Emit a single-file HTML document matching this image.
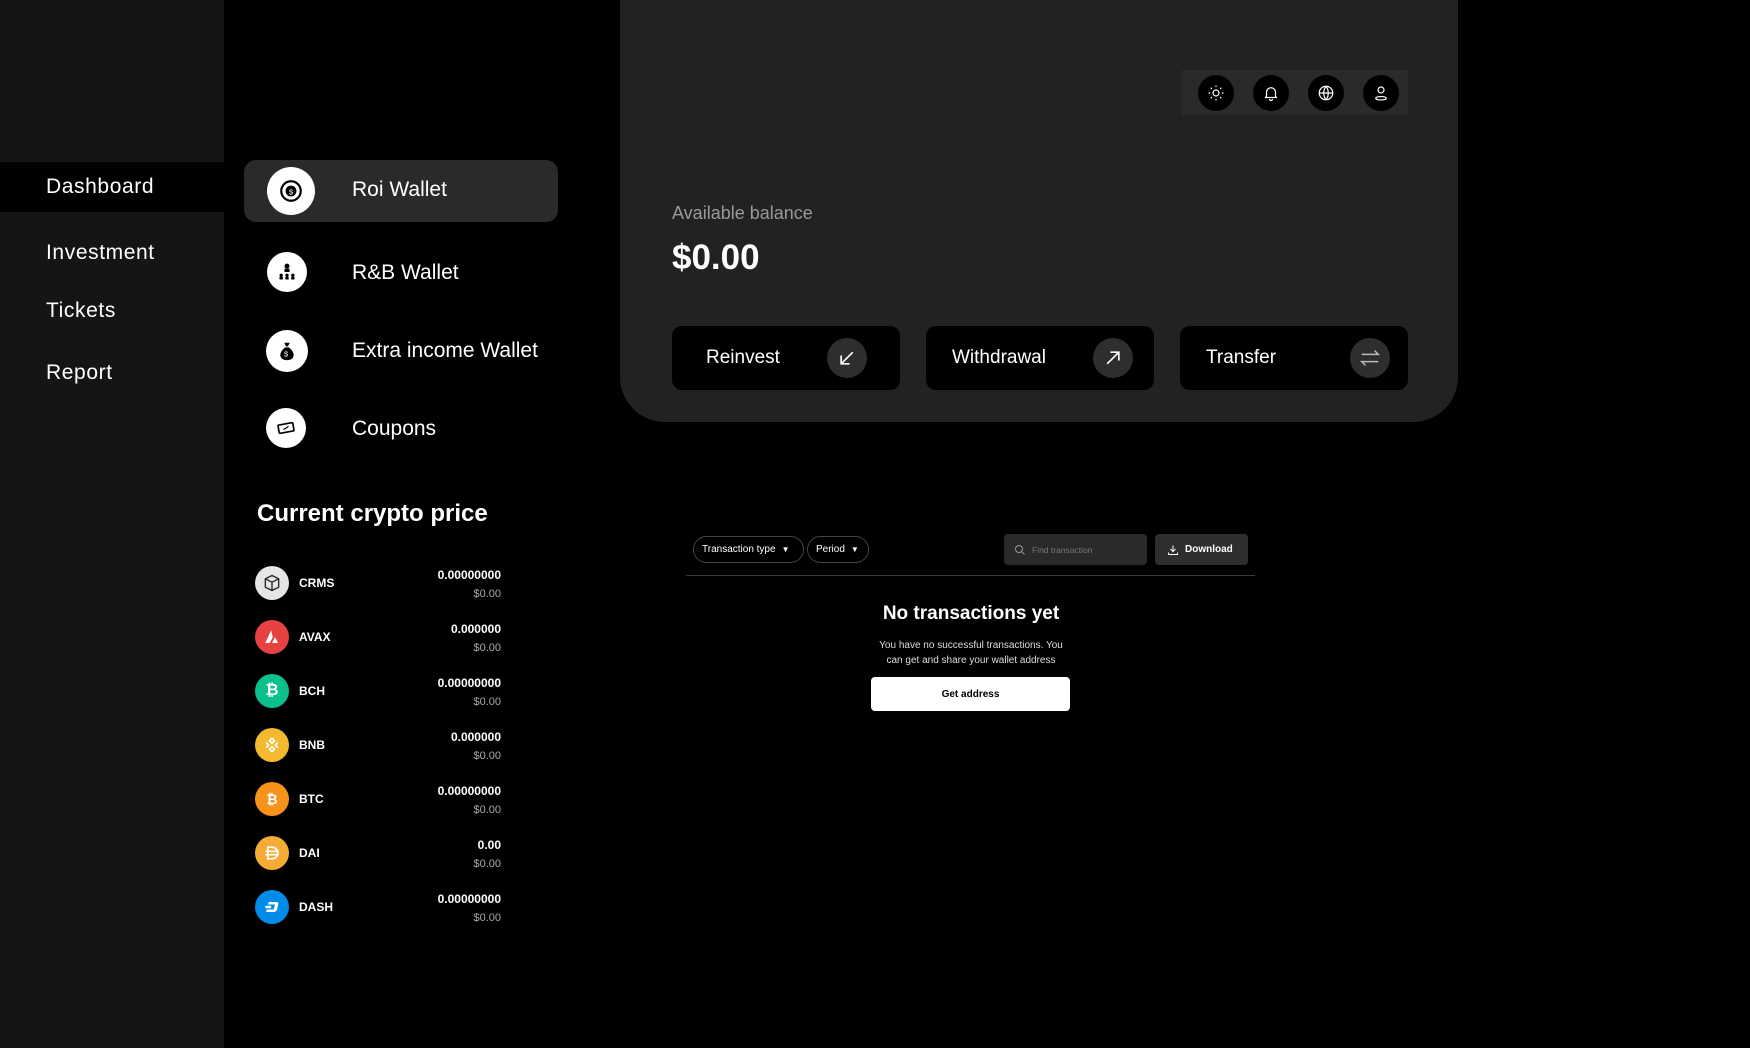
<!DOCTYPE html>
<html><head><meta charset="utf-8"><style>
*{margin:0;padding:0;box-sizing:border-box}
body{width:1750px;height:1048px;background:#000;color:#fff;font-family:"Liberation Sans",sans-serif;position:relative;overflow:hidden}
.abs{position:absolute}
.side{left:0;top:0;width:224px;height:1048px;background:#151515}
.nav{position:absolute;left:46px;font-size:21px;letter-spacing:.6px;transform:translateY(-50%)}
.wi{position:absolute;border-radius:50%;background:#fff;display:flex;align-items:center;justify-content:center}
.wt{position:absolute;left:352px;font-size:21px;transform:translateY(-50%)}
.ci{position:absolute;left:255px;width:34px;height:34px;border-radius:50%;display:flex;align-items:center;justify-content:center;font-weight:bold;font-size:16px;color:#fff}
.cs{position:absolute;left:299px;font-size:12px;font-weight:bold;transform:translateY(-50%)}
.cv{position:absolute;right:1249px;text-align:right;font-size:12px;font-weight:bold;line-height:18px}
.cv span{color:#aaa;font-size:11px;font-weight:normal}
.card{left:620px;top:-50px;width:838px;height:472px;background:#222;border-radius:0 0 45px 45px}
.ic{position:absolute;top:75px;width:36px;height:36px;border-radius:50%;background:#000;display:flex;align-items:center;justify-content:center}
.btn{position:absolute;top:326px;width:228px;height:64px;background:#000;border-radius:10px}
.btn .t{position:absolute;left:34px;top:50%;transform:translateY(-50%);font-size:19px}
.btn .c{position:absolute;right:33px;top:12px;width:40px;height:40px;border-radius:50%;background:#2e2e2e;display:flex;align-items:center;justify-content:center}
.pill{position:absolute;top:536px;height:27px;border:1px solid #444;border-radius:14px;font-size:10px;display:flex;align-items:center;padding-left:8px}
</style></head><body>
<div class="abs side"></div>
<div class="abs" style="left:0;top:162px;width:224px;height:50px;background:#000"></div>
<div class="nav" style="top:187px">Dashboard</div>
<div class="nav" style="top:253px">Investment</div>
<div class="nav" style="top:311px">Tickets</div>
<div class="nav" style="top:373px">Report</div>

<div class="abs" style="left:244px;top:160px;width:314px;height:62px;background:#2a2a2a;border-radius:12px"></div>
<div class="wi" style="left:267px;top:167px;width:48px;height:48px"><svg width="26" height="26" viewBox="0 0 24 24"><circle cx="12" cy="12" r="9" fill="none" stroke="#000" stroke-width="2"/><circle cx="12" cy="12" r="5" fill="#000"/><text x="12" y="15" font-size="7" fill="#fff" text-anchor="middle">$</text></svg></div>
<div class="wt" style="top:190px">Roi Wallet</div>
<div class="wi" style="left:267px;top:252px;width:40px;height:40px"><svg width="20" height="20" viewBox="0 0 24 24" fill="#000"><circle cx="12" cy="5" r="3"/><rect x="9" y="8" width="6" height="4"/><circle cx="5" cy="16" r="2"/><circle cx="12" cy="16" r="2"/><circle cx="19" cy="16" r="2"/><rect x="3" y="18" width="4" height="3"/><rect x="10" y="18" width="4" height="3"/><rect x="17" y="18" width="4" height="3"/></svg></div>
<div class="wt" style="top:273px">R&amp;B Wallet</div>
<div class="wi" style="left:266px;top:330px;width:42px;height:42px"><svg width="22" height="22" viewBox="0 0 24 24" fill="#000"><path d="M9 3h6l-2 4h-2z"/><path d="M10 8h4c4 3 6 7 5 10-1 3-4 4-7 4s-6-1-7-4c-1-3 1-7 5-10z"/><text x="11" y="18" font-size="8" fill="#fff" text-anchor="middle">$</text></svg></div>
<div class="wt" style="top:351px">Extra income Wallet</div>
<div class="wi" style="left:266px;top:408px;width:40px;height:40px"><svg width="20" height="20" viewBox="0 0 24 24"><rect x="3" y="7" width="18" height="10" rx="1" fill="none" stroke="#000" stroke-width="2" transform="rotate(-10 12 12)"/><path d="M9 14l6-4" stroke="#000" stroke-width="1.5"/></svg></div>
<div class="wt" style="top:429px">Coupons</div>

<div class="abs" style="left:257px;top:500px;font-size:24px;font-weight:600">Current crypto price</div>

<div class="ci" style="top:566px;background:#e6e6e6"><svg width="20" height="20" viewBox="0 0 24 24" fill="none" stroke="#222" stroke-width="1.6"><path d="M12 3l8 4v10l-8 4-8-4V7z M4 7l8 4 8-4 M12 11v10"/></svg></div>
<div class="cs" style="top:583px">CRMS</div><div class="cv" style="top:566px">0.00000000<br><span>$0.00</span></div>
<div class="ci" style="top:620px;background:#e84142"><svg width="18" height="18" viewBox="0 0 24 24" fill="#fff"><path d="M11 3l-8 17h6l4-8z"/><path d="M16 12l-4 8h8z"/></svg></div>
<div class="cs" style="top:637px">AVAX</div><div class="cv" style="top:620px">0.000000<br><span>$0.00</span></div>
<div class="ci" style="top:674px;background:#0ac18e">₿</div>
<div class="cs" style="top:691px">BCH</div><div class="cv" style="top:674px">0.00000000<br><span>$0.00</span></div>
<div class="ci" style="top:728px;background:#f3ba2f"><svg width="20" height="20" viewBox="0 0 24 24" fill="none" stroke="#fff" stroke-width="2"><path d="M12 4l3 3-3 3-3-3z M12 14l3 3-3 3-3-3z M5 9l3 3-3 3 M19 9l-3 3 3 3"/></svg></div>
<div class="cs" style="top:745px">BNB</div><div class="cv" style="top:728px">0.000000<br><span>$0.00</span></div>
<div class="ci" style="top:782px;background:#f7931a;font-size:14px">₿</div>
<div class="cs" style="top:799px">BTC</div><div class="cv" style="top:782px">0.00000000<br><span>$0.00</span></div>
<div class="ci" style="top:836px;background:#f5ac37"><svg width="20" height="20" viewBox="0 0 24 24" fill="none" stroke="#fff" stroke-width="2"><path d="M7 5h5a7 7 0 010 14H7z M4 10h16 M4 14h16"/></svg></div>
<div class="cs" style="top:853px">DAI</div><div class="cv" style="top:836px">0.00<br><span>$0.00</span></div>
<div class="ci" style="top:890px;background:#008ce7"><svg width="20" height="20" viewBox="0 0 24 24" fill="#fff"><path d="M8 6h9c2 0 3 1 2.5 3l-1.5 6c-.5 2-2 3-4 3H5l.7-3h8.3l1.7-6H7.3z"/><rect x="4" y="10.5" width="7" height="3"/></svg></div>
<div class="cs" style="top:907px">DASH</div><div class="cv" style="top:890px">0.00000000<br><span>$0.00</span></div>

<div class="abs card"></div>
<div class="abs" style="left:1182px;top:70px;width:226px;height:45px;background:#2a2a2a"></div>
<div class="ic" style="left:1198px"><svg width="18" height="18" viewBox="0 0 24 24" fill="none" stroke="#fff" stroke-width="1.6"><circle cx="12" cy="12" r="4"/><path d="M12 2v2M12 20v2M2 12h2M20 12h2M5 5l1.5 1.5M17.5 17.5L19 19M5 19l1.5-1.5M17.5 6.5L19 5"/></svg></div>
<div class="ic" style="left:1253px"><svg width="18" height="18" viewBox="0 0 24 24" fill="none" stroke="#fff" stroke-width="1.6"><path d="M6 17V11a6 6 0 0112 0v6l2 1H4z M10 20a2 2 0 004 0"/></svg></div>
<div class="ic" style="left:1308px"><svg width="18" height="18" viewBox="0 0 24 24" fill="none" stroke="#fff" stroke-width="1.6"><circle cx="12" cy="12" r="9"/><path d="M3 12h18M12 3c-4 5-4 13 0 18M12 3c4 5 4 13 0 18"/></svg></div>
<div class="ic" style="left:1363px"><svg width="18" height="18" viewBox="0 0 24 24" fill="none" stroke="#fff" stroke-width="1.6"><circle cx="12" cy="8" r="4"/><path d="M5 19c0-3 14-3 14 0s-14 3-14 0z"/></svg></div>

<div class="abs" style="left:672px;top:203px;font-size:18px;color:#999">Available balance</div>
<div class="abs" style="left:672px;top:238px;font-size:35px;font-weight:bold">$0.00</div>

<div class="btn" style="left:672px"><div class="t">Reinvest</div><div class="c"><svg width="20" height="20" viewBox="0 0 24 24" fill="none" stroke="#fff" stroke-width="2"><path d="M19 5L5 19M5 9v10h10"/></svg></div></div>
<div class="btn" style="left:926px"><div class="t" style="left:26px">Withdrawal</div><div class="c" style="right:21px"><svg width="20" height="20" viewBox="0 0 24 24" fill="none" stroke="#fff" stroke-width="2"><path d="M5 19L19 5M9 5h10v10"/></svg></div></div>
<div class="btn" style="left:1180px"><div class="t" style="left:26px">Transfer</div><div class="c" style="right:18px"><svg width="22" height="22" viewBox="0 0 24 24" fill="none" stroke="#bbb" stroke-width="1.6"><path d="M3 8h18l-4-4M21 16H3l4 4"/></svg></div></div>

<div class="pill" style="left:693px;width:111px">Transaction type <span style="margin-left:6px;font-size:8px">▼</span></div>
<div class="pill" style="left:807px;width:62px">Period <span style="margin-left:6px;font-size:8px">▼</span></div>
<div class="abs" style="left:1004px;top:534px;width:143px;height:31px;background:#2a2a2a;border-radius:4px;font-size:8.5px;color:#777;display:flex;align-items:center;padding-left:10px"><svg width="12" height="12" viewBox="0 0 24 24" fill="none" stroke="#999" stroke-width="2" style="margin-right:6px"><circle cx="10" cy="10" r="7"/><path d="M15 15l6 6"/></svg>Find transaction</div>
<div class="abs" style="left:1155px;top:534px;width:93px;height:31px;background:#2e2e2e;border-radius:4px;font-size:10px;font-weight:bold;display:flex;align-items:center;padding-left:12px"><svg width="12" height="12" viewBox="0 0 24 24" fill="none" stroke="#fff" stroke-width="2" style="margin-right:6px"><path d="M12 3v12M7 10l5 5 5-5M3 17v4h18v-4"/></svg>Download</div>
<div class="abs" style="left:686px;top:575px;width:569px;height:1px;background:#3a3a3a"></div>
<div class="abs" style="left:771px;width:400px;top:603px;text-align:center;font-size:19px;font-weight:bold">No transactions yet</div>
<div class="abs" style="left:771px;width:400px;top:638px;text-align:center;font-size:10px;line-height:15px;color:#ddd">You have no successful transactions. You<br>can get and share your wallet address</div>
<div class="abs" style="left:871px;top:677px;width:199px;height:34px;background:#fff;border-radius:4px;color:#000;font-size:10px;font-weight:bold;display:flex;align-items:center;justify-content:center">Get address</div>
</body></html>
